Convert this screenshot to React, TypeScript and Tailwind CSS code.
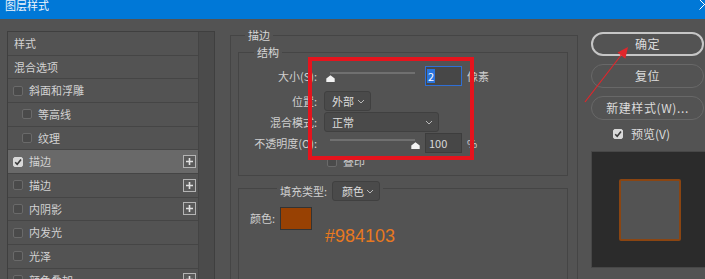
import React from 'react';

type Row = {
  label: string;
  box?: boolean;
  level?: number;
  checked?: boolean;
  plus?: boolean;
  active?: boolean;
};

const rows: Row[] = [
  { label: '样式' },
  { label: '混合选项' },
  { label: '斜面和浮雕', box: true, level: 1 },
  { label: '等高线', box: true, level: 2 },
  { label: '纹理', box: true, level: 2 },
  { label: '描边', box: true, level: 1, checked: true, plus: true, active: true },
  { label: '描边', box: true, level: 1, plus: true },
  { label: '内阴影', box: true, level: 1, plus: true },
  { label: '内发光', box: true, level: 1 },
  { label: '光泽', box: true, level: 1 },
  { label: '颜色叠加', box: true, level: 1, plus: true },
];

const CheckBox = ({ checked = false }: { checked?: boolean }) => (
  <span
    className={`flex h-[10px] w-[10px] shrink-0 items-center justify-center rounded-[2px] border ${
      checked ? 'border-[#d9d9d9] bg-[#d9d9d9]' : 'border-[#6a6a6a] bg-[#4a4a4a]'
    }`}
  >
    {checked && (
      <svg width="8" height="8" viewBox="0 0 8 8">
        <path d="M1.2 4.2l2 2 3.8-4.6" fill="none" stroke="#3a3a3a" strokeWidth="1.6" />
      </svg>
    )}
  </span>
);

const PlusBox = () => (
  <span className="flex h-[13px] w-[13px] items-center justify-center border border-[#b4b4b4] bg-[#5a5a5a]">
    <svg width="9" height="9" viewBox="0 0 9 9">
      <path d="M4.5 1v7M1 4.5h7" stroke="#e0e0e0" strokeWidth="1.6" />
    </svg>
  </span>
);

const Chevron = () => (
  <svg width="8" height="5" viewBox="0 0 8 5">
    <path d="M1 1l3 3 3-3" fill="none" stroke="#b8b8b8" strokeWidth="1" />
  </svg>
);

const Dropdown = ({ value, className }: { value: string; className: string }) => (
  <div
    className={`flex h-[20px] items-center justify-between rounded-[3px] border border-[#404040] bg-[#4a4a4a] pl-[7px] pr-[5px] text-[#dcdcdc] ${className}`}
  >
    <span>{value}</span>
    <Chevron />
  </div>
);

const Slider = ({ thumb }: { thumb: number }) => (
  <div className="relative h-[20px] w-[101px] shrink-0">
    <div className="absolute left-[6px] top-[6px] h-[2px] w-[85px] bg-[#707070]" />
    <svg className="absolute top-[9px]" style={{ left: thumb }} width="9" height="7" viewBox="0 0 9 7">
      <path d="M4.5 0.3L8.7 3.6V7H0.3V3.6Z" fill="#f2f2f2" />
    </svg>
  </div>
);

const Label = ({ children }: { children: React.ReactNode }) => (
  <span className="w-[78px] shrink-0 text-right text-[#cfcfcf]">{children}</span>
);

const LayerList = () => (
  <div className="ml-[7px] mt-[12px] flex h-[300px] w-[208px] shrink-0 border border-[#3f3f3f]">
    <div className="w-[191px] border-r border-[#444444]">
      {rows.map((row, i) => (
        <div
          key={i}
          className={`flex h-[23.67px] items-center justify-between border-b border-[#454545] pr-[2px] ${
            row.active ? 'bg-[#696969]' : 'bg-[#535353]'
          }`}
        >
          <div
            className={`flex items-center gap-[6px] ${
              !row.box ? 'pl-[6px]' : row.level === 2 ? 'pl-[14px]' : 'pl-[5px]'
            }`}
          >
            {row.box && <CheckBox checked={row.checked} />}
            <span className="text-[#d2d2d2]">{row.label}</span>
          </div>
          {row.plus && <PlusBox />}
        </div>
      ))}
    </div>
    <div className="flex-1 bg-[#4b4b4b]" />
  </div>
);

const StrokePanel = () => (
  <fieldset className="ml-[15px] mt-[8px] h-[300px] w-[348px] shrink-0 border border-[#454545] pl-[7px] pr-[9px]">
    <legend className="ml-[7px] px-[3px] leading-[16px] text-[#d6d6d6]">描边</legend>

    <fieldset className="mt-[1px] border border-[#454545] pb-[8px]">
      <legend className="ml-[15px] px-[3px] leading-[16px] text-[#d6d6d6]">结构</legend>

      <div className="mt-[6px] flex h-[20px] items-center">
        <Label>大小(S):</Label>
        <div className="ml-[7px]">
          <Slider thumb={2} />
        </div>
        <div className="flex h-[20px] w-[37px] items-center border border-[#2f6fd6] bg-[#474747] pl-[1px]">
          <span className="bg-[#2a74dc] px-[1px] leading-[14px] text-white">2</span>
        </div>
        <span className="ml-[5px] text-[#cfcfcf]">像素</span>
      </div>

      <div className="mt-[5px] flex h-[20px] items-center">
        <Label>位置:</Label>
        <Dropdown value="外部" className="ml-[7px] w-[47px]" />
      </div>

      <div className="mt-[1px] flex h-[20px] items-center">
        <Label>混合模式:</Label>
        <Dropdown value="正常" className="ml-[7px] w-[115px]" />
      </div>

      <div className="mt-[1px] flex h-[20px] items-center">
        <Label>不透明度(O):</Label>
        <div className="ml-[7px]">
          <Slider thumb={87} />
        </div>
        <div className="flex h-[20px] w-[37px] items-center border border-[#3d3d3d] bg-[#474747] pl-[3px] text-[#d8d8d8]">
          100
        </div>
        <span className="ml-[5px] text-[#cfcfcf]">%</span>
      </div>

      <div className="mt-[3px] flex h-[11px] items-center gap-[6px] pl-[88px]">
        <CheckBox />
        <span className="text-[#cfcfcf]">叠印</span>
      </div>
    </fieldset>

    <fieldset className="h-[140px] border border-[#454545]">
      <legend className="ml-[38px] flex items-center px-[3px] pt-[5px]">
        <span className="text-[#cfcfcf]">填充类型:</span>
        <Dropdown value="颜色" className="ml-[5px] w-[48px] pl-[9px]" />
      </legend>
      <div className="mt-[6px] flex items-center pl-[11px]">
        <span className="text-[#cfcfcf]">颜色:</span>
        <div className="ml-[5px] h-[23px] w-[32px] border border-[#333333] bg-[#984103]" />
      </div>
      <div className="-mt-[4px] ml-[86px] font-['Liberation_Sans',sans-serif] text-[18px] leading-[20px] text-[#e8791f]">
        #984103
      </div>
    </fieldset>
  </fieldset>
);

const ActionColumn = () => (
  <div className="ml-[13px] mt-[13px] flex w-[118px] shrink-0 flex-col text-[12px] text-[#dcdcdc]">
    <button className="flex h-[24px] w-[113px] items-center justify-center rounded-full border-2 border-[#c6c6c6] tracking-[0.5px]">
      确定
    </button>
    <button className="mt-[8px] flex h-[24px] w-[113px] items-center justify-center rounded-full border border-[#686868] tracking-[0.5px]">
      复位
    </button>
    <button className="mt-[8px] flex h-[24px] w-[113px] items-center justify-center rounded-full border border-[#686868] tracking-[0.6px]">
      新建样式(W)...
    </button>
    <div className="mt-[8px] flex h-[12px] items-center gap-[8px] pl-[22px]">
      <CheckBox checked />
      <span>预览(V)</span>
    </div>
    <div className="mt-[11px] flex h-[117px] w-[118px] items-center justify-center border border-[#474747] bg-[#2b2b2b]">
      <div className="h-[62px] w-[62px] rounded-[2px] border-2 border-[#8a4512] bg-[#535353]" />
    </div>
  </div>
);

export default function App() {
  return (
    <div className="relative h-[279px] w-[705px] overflow-hidden bg-[#535353] font-['Noto_Sans_CJK_SC',sans-serif] text-[11px]">
      <div className="flex h-[19px] items-start justify-between bg-[#0078d7]">
        <span className="-mt-[3px] ml-[5px] leading-[16px] text-[#eef5fc]">图层样式</span>
        <svg className="-mr-[5px] -mt-[1px]" width="11" height="11" viewBox="0 0 11 11">
          <path d="M0.5 0.5l10 10M10.5 0.5l-10 10" stroke="#ffffff" strokeWidth="1" />
        </svg>
      </div>

      <div className="flex items-start">
        <LayerList />
        <StrokePanel />
        <ActionColumn />
      </div>

      {/* annotation overlay */}
      <div className="pointer-events-none absolute left-[308px] top-[57px] h-[103px] w-[166px] border-4 border-[#e5141d]" />
      <svg className="pointer-events-none absolute left-0 top-0" width="705" height="279">
        <line x1="585" y1="102" x2="622" y2="54" stroke="#e0262b" strokeWidth="1.2" />
        <polygon points="628,47 617.5,52.6 625.3,58.8" fill="#e0262b" />
      </svg>
    </div>
  );
}
